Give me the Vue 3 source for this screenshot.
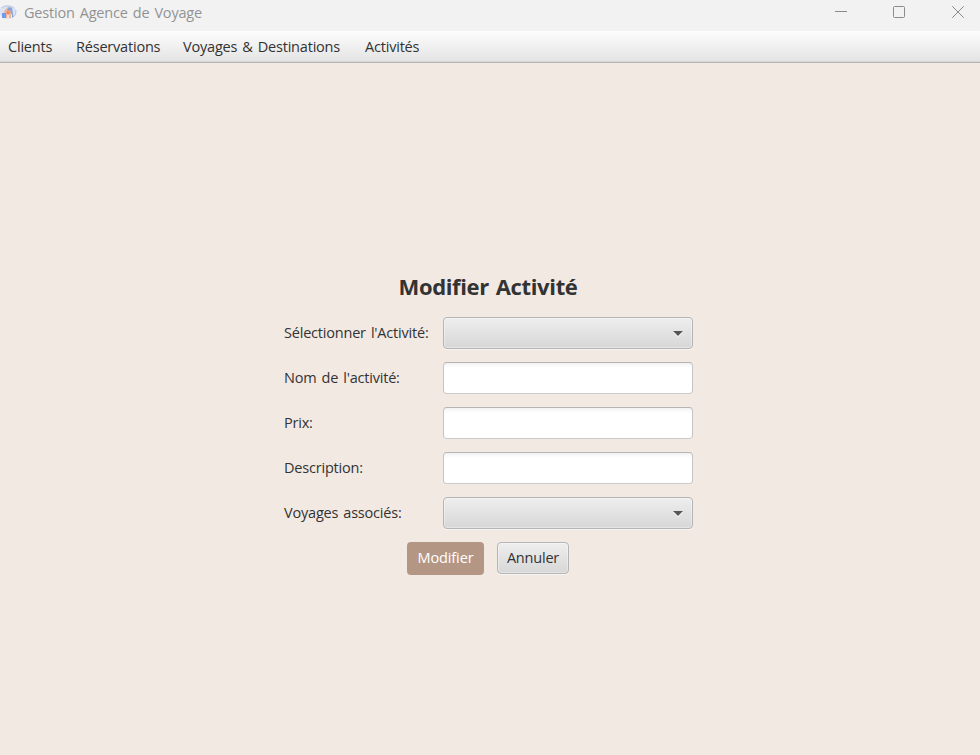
<script setup>
const menus = [
  { label: 'Clients', width: 68 },
  { label: 'Réservations', width: 107 },
  { label: 'Voyages & Destinations', width: 182 },
  { label: 'Activités', width: 80 },
]
const fields = [
  { id: 'activite', label: "Sélectionner l'Activité:", type: 'combo' },
  { id: 'nom', label: "Nom de l'activité:", type: 'text' },
  { id: 'prix', label: 'Prix:', type: 'text' },
  { id: 'description', label: 'Description:', type: 'text' },
  { id: 'voyages', label: 'Voyages associés:', type: 'combo' },
]
</script>

<template>
  <div class="window">
    <header class="titlebar">
      <svg class="logo" width="17" height="18" viewBox="0 0 17 18">
        <ellipse cx="8" cy="9" rx="8.5" ry="7" fill="#d9e3f3" />
        <path d="M1 5Q7 1 14 5M16 7Q17 12 12 15" fill="none" stroke="#b9cae8" />
        <path d="M4 8L8 4L12 8V15H5Z" fill="#efb49c" />
        <path d="M9 4L12 5L13.5 14H11.5L10.5 8L7 7Z" fill="#8ba4d6" />
        <rect x="2" y="10" width="4" height="5" fill="#6d9bee" />
        <path d="M7 12H9V15H7ZM11 11H12V15H11Z" fill="#f8e1d6" />
        <circle cx="8" cy="9.5" r="1.7" fill="#f28a5c" />
      </svg>
      <span class="caption">Gestion Agence de Voyage</span>
      <div class="controls">
        <svg width="14" height="14" viewBox="0 0 14 14"><path d="M1 6.5H13" /></svg>
        <svg width="14" height="14" viewBox="0 0 14 14"><rect x="1.5" y="1.5" width="11" height="11" rx="1" /></svg>
        <svg width="14" height="14" viewBox="0 0 14 14"><path d="M1.2 1.2L12.8 12.8M12.8 1.2L1.2 12.8" /></svg>
      </div>
    </header>
    <nav class="menubar">
      <span v-for="m in menus" :key="m.label" class="menu" :style="{ width: m.width + 'px' }">{{ m.label }}</span>
    </nav>
    <main class="content">
      <h1>Modifier Activité</h1>
      <form class="form" @submit.prevent>
        <template v-for="f in fields" :key="f.id">
          <label :for="f.id">{{ f.label }}</label>
          <button v-if="f.type === 'combo'" :id="f.id" type="button" class="combo">
            <svg width="10" height="6" viewBox="0 0 10 6"><path d="M0 1H10L5 6Z" fill="#fff" /><path d="M0 0H10L5 5Z" fill="#555" /></svg>
          </button>
          <input v-else :id="f.id" type="text" class="field" />
        </template>
      </form>
      <div class="actions">
        <button type="button" class="btn primary">Modifier</button>
        <button type="button" class="btn secondary">Annuler</button>
      </div>
    </main>
  </div>
</template>

<style>
body { margin: 0; background: #f2e9e3; }
</style>

<style scoped>
* { box-sizing: border-box; }
.window {
  display: flex;
  flex-direction: column;
  width: 980px;
  height: 755px;
  overflow: hidden;
  background: #f2e9e3;
  color: #333;
  font-family: "Open Sans", "Noto Sans", sans-serif;
  font-size: 14.5px;
  letter-spacing: -0.2px;
  word-spacing: 1.5px;
  white-space: nowrap;
}
.titlebar {
  display: flex;
  flex: none;
  height: 31px;
  padding-top: 3px;
  background: #f2f2f2;
}
.logo { flex: none; }
.caption { margin-left: 7px; color: #929292; line-height: 20px; }
.controls { display: flex; margin: 2px 15px 0 auto; }
.controls svg { display: block; fill: none; stroke: #8b8b8b; stroke-width: 1; }
.controls svg:nth-child(2) { margin: 0 45px 0 44px; }
.menubar {
  display: flex;
  flex: none;
  height: 32px;
  padding-left: 8px;
  border-bottom: 1px solid #b5b5b5;
  background: linear-gradient(#fdfdfd, #e3e3e3);
  box-shadow: inset 0 -1px #d5d8d9;
  line-height: 31px;
}
.content {
  display: flex;
  flex-direction: column;
  padding-top: 207px;
}
h1 {
  width: 976px;
  margin: 0;
  text-align: center;
  font-size: 22px;
  line-height: 32px;
  letter-spacing: -0.35px;
  font-weight: 700;
}
.form {
  display: grid;
  grid-template-columns: 159px 250px;
  grid-auto-rows: 32px;
  row-gap: 13px;
  margin: 15px 0 0 284px;
}
label { line-height: 31px; }
.combo, .field, .btn {
  margin: 0;
  border: 1px solid #b5b5b5;
  border-radius: 4px;
  outline: none;
  font: inherit;
  letter-spacing: inherit;
  color: inherit;
}
.combo {
  display: flex;
  align-items: center;
  justify-content: flex-end;
  padding: 2px 9px 0 0;
}
.combo, .secondary {
  background: linear-gradient(#eeeeee, #d7d7d7);
  box-shadow: inset 0 0 0 1px rgba(255, 255, 255, 0.35), 0 1px #f8f4f1;
}
.field {
  width: 250px;
  height: 32px;
  padding: 0 8px;
  border-color: #b5b5b5 #c4c4c4 #cbcbcb;
  background: linear-gradient(#f2f2f2, #fff 5px);
}
.actions {
  display: flex;
  align-items: flex-start;
  gap: 13px;
  margin: 13px 0 0 407px;
}
.btn { height: 32px; padding: 0; line-height: 28px; text-align: center; }
.primary { width: 77px; height: 33px; padding-bottom: 2px; border: 0; background: #b49685; color: #fff; line-height: 30px; letter-spacing: -0.1px; }
.secondary { width: 72px; }
</style>
